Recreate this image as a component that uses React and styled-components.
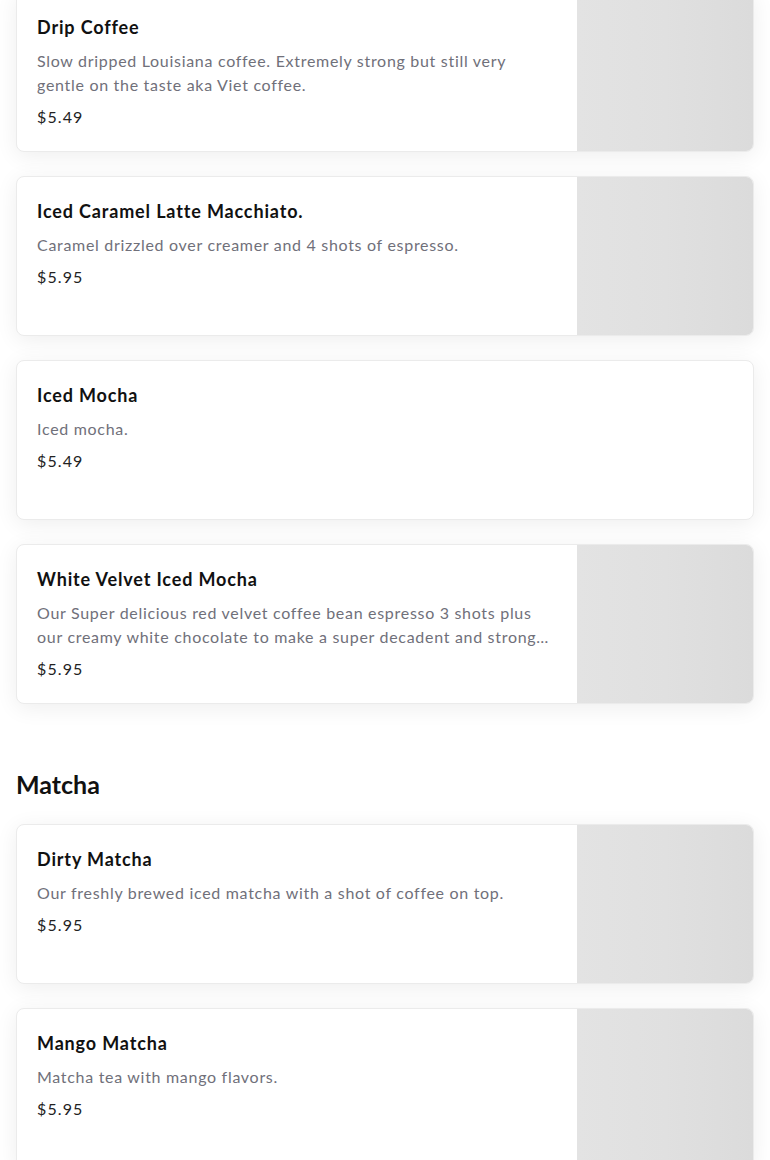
import React from "react";
import styled, { createGlobalStyle } from "styled-components";

const Global = createGlobalStyle`
  html, body { margin: 0; padding: 0; background: #ffffff; }
  body { font-family: "Lato", "Noto Sans", sans-serif; color: #111; overflow: hidden; }
  * { box-sizing: border-box; }
`;

const Page = styled.div`
  padding: 0 16px;
  margin-top: -8px;
  display: flex;
  flex-direction: column;
`;

const Section = styled.section`
  display: flex;
  flex-direction: column;
`;

const SectionTitle = styled.h2`
  margin: 64px 0 24px;
  font-size: 25px;
  line-height: 32px;
  font-weight: 700;
  color: #111;
`;

const List = styled.div`
  display: flex;
  flex-direction: column;
  gap: 24px;
`;

const Card = styled.div`
  display: flex;
  height: 160px;
  background: #fff;
  border: 1px solid #ebebeb;
  border-radius: 8px;
  box-shadow: 0 4px 22px rgba(0, 0, 0, 0.07);
  overflow: hidden;
`;

const Body = styled.div`
  flex: 1;
  min-width: 0;
  padding: 20px 20px;
  display: flex;
  flex-direction: column;
  gap: 8px;
`;

const Title = styled.h3`
  margin: 0;
  font-size: 18px;
  line-height: 28px;
  font-weight: 700;
  letter-spacing: 0.85px;
  color: #111;
`;

const Desc = styled.p`
  margin: 0;
  font-size: 16px;
  line-height: 24px;
  color: #70707a;
  letter-spacing: 0.7px;
  display: -webkit-box;
  -webkit-line-clamp: 2;
  -webkit-box-orient: vertical;
  overflow: hidden;
`;

const Price = styled.div`
  font-size: 16px;
  line-height: 24px;
  color: #222;
  letter-spacing: 1.1px;
`;

const Thumb = styled.div`
  flex: 0 0 176px;
  background: linear-gradient(90deg, #e3e3e3 0%, #e0e0e0 50%, #dbdbdb 100%);
`;

const coffee = [
  { name: "Drip Coffee", desc: "Slow dripped Louisiana coffee. Extremely strong but still very gentle on the taste aka Viet coffee.", price: "$5.49", img: true },
  { name: "Iced Caramel Latte Macchiato.", desc: "Caramel drizzled over creamer and 4 shots of espresso.", price: "$5.95", img: true },
  { name: "Iced Mocha", desc: "Iced mocha.", price: "$5.49", img: false },
  { name: "White Velvet Iced Mocha", desc: "Our Super delicious red velvet coffee bean espresso 3 shots plus our creamy white chocolate to make a super decadent and strong drink that you will love.", price: "$5.95", img: true },
];

const matcha = [
  { name: "Dirty Matcha", desc: "Our freshly brewed iced matcha with a shot of coffee on top.", price: "$5.95", img: true },
  { name: "Mango Matcha", desc: "Matcha tea with mango flavors.", price: "$5.95", img: true },
];

const Item = ({ item }) => (
  <Card>
    <Body>
      <Title>{item.name}</Title>
      <Desc>{item.desc}</Desc>
      <Price>{item.price}</Price>
    </Body>
    {item.img && <Thumb />}
  </Card>
);

export default function App() {
  return (
    <>
      <Global />
      <Page>
        <Section>
          <List>
            {coffee.map((i) => <Item key={i.name} item={i} />)}
          </List>
        </Section>
        <Section>
          <SectionTitle>Matcha</SectionTitle>
          <List>
            {matcha.map((i) => <Item key={i.name} item={i} />)}
          </List>
        </Section>
      </Page>
    </>
  );
}
